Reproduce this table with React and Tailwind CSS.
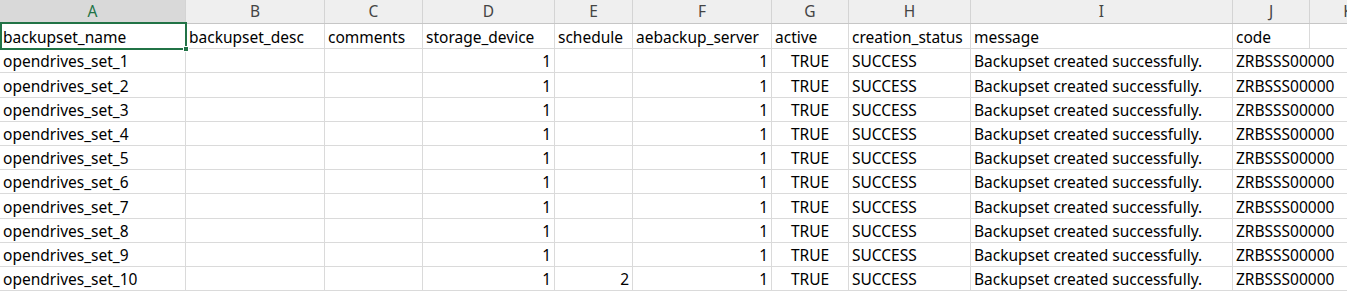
import React from 'react';

const cols = [
  { key: 'A', w: 'w-[186px]' },
  { key: 'B', w: 'w-[139px]' },
  { key: 'C', w: 'w-[98px]' },
  { key: 'D', w: 'w-[132px]' },
  { key: 'E', w: 'w-[78px]' },
  { key: 'F', w: 'w-[139px]' },
  { key: 'G', w: 'w-[77px]' },
  { key: 'H', w: 'w-[122px]' },
  { key: 'I', w: 'w-[262px]' },
  { key: 'J', w: 'w-[77px]' },
  { key: 'K', w: 'w-[77px]' },
];

const header = ['backupset_name', 'backupset_desc', 'comments', 'storage_device', 'schedule', 'aebackup_server', 'active', 'creation_status', 'message', 'code', ''];

// align per column for data rows
const align = ['left', 'left', 'left', 'right', 'right', 'right', 'center', 'left', 'left', 'left', 'left'];

const rowHeights = ['h-[24px]', 'h-[25px]', 'h-[24px]', 'h-[25px]', 'h-[24px]', 'h-[24px]', 'h-[24px]', 'h-[24px]', 'h-[25px]', 'h-[24px]', 'h-[24px]', 'h-[24px]'];

const rows = Array.from({ length: 10 }, (_, i) => [
  `opendrives_set_${i + 1}`,
  '',
  '',
  '1',
  i === 9 ? '2' : '',
  '1',
  'TRUE',
  'SUCCESS',
  'Backupset created successfully.',
  'ZRBSSS00000',
  '',
]);

function Cell({ col, text, a, spill, children }) {
  const al = a === 'right' ? 'justify-end pr-[3px]' : a === 'center' ? 'justify-center' : 'justify-start pl-[3px]';
  // text that spills into the next cell hides the gridline, like Excel
  const border = spill ? 'border-transparent' : 'border-[#dadada]';
  return (
    <div className={`${col.w} shrink-0 h-full flex items-end ${al} border-r ${border} whitespace-nowrap overflow-visible relative`}>
      {children}
      <span className="relative leading-[22px]">{text}</span>
    </div>
  );
}

export default function App() {
  return (
    <div className="w-[1347px] h-[291px] overflow-hidden bg-white text-[15.5px] text-black select-none" style={{ fontFamily: '"Noto Sans", "Open Sans", sans-serif' }}>
      {/* column letters */}
      <div className={`${rowHeights[0]} flex bg-[#efefef] border-b border-[#c6c6c6]`}>
        {cols.map((c) => (
          <div
            key={c.key}
            className={`${c.w} shrink-0 h-full flex items-center justify-center border-r border-[#d4d4d4] ${c.key === 'A' ? 'bg-[#d9d9d9] text-[#217346]' : 'text-[#444]'}`}
          >
            {c.key}
          </div>
        ))}
      </div>

      {/* header row */}
      <div className={`${rowHeights[1]} flex border-b border-[#dadada]`}>
        {cols.map((c, i) => (
          <Cell key={c.key} col={c} text={header[i]} a="left">
            {i === 0 && (
              <>
                <div className="absolute left-0 top-[-2px] right-[-2px] bottom-[-2px] border-2 border-[#217346] pointer-events-none z-10" />
                <div className="absolute right-[-4px] bottom-[-4px] w-[6px] h-[6px] bg-[#217346] border border-white z-20" />
              </>
            )}
          </Cell>
        ))}
      </div>

      {rows.map((r, ri) => (
        <div key={ri} className={`${rowHeights[ri + 2]} flex border-b border-[#dadada]`}>
          {cols.map((c, i) => (
            <Cell key={c.key} col={c} text={r[i]} a={align[i]} spill={c.key === 'J'} />
          ))}
        </div>
      ))}
    </div>
  );
}
